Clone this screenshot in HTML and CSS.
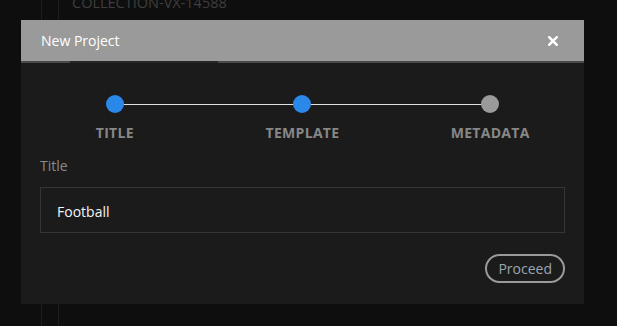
FILE: index.html
```html
<!DOCTYPE html>
<html>
<head>
<meta charset="utf-8">
<link rel="stylesheet" href="styles.css">
</head>
<body>
<div class="page">
  <div class="rail"></div>
  <div class="bg-title">COLLECTION-VX-14588</div>
</div>
<div class="modal">
  <div class="modal-header">
    <span class="modal-title">New Project</span>
    <svg class="close" width="10" height="10" viewBox="0 0 10 10"><path d="M1.2 1.2 L8.8 8.8 M8.8 1.2 L1.2 8.8" stroke="#fff" stroke-width="2.4" stroke-linecap="square"/></svg>
  </div>
  <div class="stepper">
    <div class="track">
      <span class="dot active"></span>
      <span class="dot active"></span>
      <span class="dot"></span>
    </div>
    <div class="labels">
      <span>TITLE</span>
      <span>TEMPLATE</span>
      <span>METADATA</span>
    </div>
  </div>
  <div class="form">
    <div class="field-label">Title</div>
    <div class="input">Football</div>
    <div class="actions">
      <button class="btn">Proceed</button>
    </div>
  </div>
</div>
</body>
</html>
```
FILE: styles.css
```css
html, body {
  margin: 0;
  padding: 0;
  height: 100%;
}
body {
  background: #0e0e0e;
  font-family: "Open Sans", "Noto Sans", sans-serif;
  position: relative;
  overflow: hidden;
}
.page {
  display: flex;
  height: 100%;
  padding-left: 41px;
}
.rail {
  width: 16px;
  border-left: 1px solid #1d1d1d;
  border-right: 1px solid #1d1d1d;
  height: 100%;
}
.bg-title {
  margin-left: 13px;
  margin-top: -7px;
  font-size: 14.5px;
  line-height: 20px;
  color: #3e3e3e;
}
.modal {
  position: absolute;
  top: 20px;
  left: 21px;
  width: 563px;
  height: 284px;
  background: #1b1b1b;
}
.modal-header {
  position: relative;
  height: 41px;
  background: #9a9a9a;
  border-bottom: 2px solid #494949;
  display: flex;
  align-items: center;
  justify-content: space-between;
  padding: 0 26px 0 20px;
}
.modal-header::after {
  content: "";
  position: absolute;
  left: 49px;
  width: 148px;
  bottom: -2px;
  height: 2px;
  background: #262626;
}
.modal-title {
  color: #fff;
  font-size: 14px;
  line-height: 19px;
}
.close {
  display: block;
}
.stepper {
  padding-top: 32px;
}
.track {
  display: grid;
  grid-template-columns: repeat(3, 1fr);
  height: 18px;
  background: linear-gradient(#e2e2e2, #e2e2e2) no-repeat center / 66.67% 1px;
}
.dot {
  width: 18px;
  height: 18px;
  border-radius: 50%;
  background: #9a9a9a;
  justify-self: center;
}
.dot.active {
  background: #2b88e8;
}
.labels {
  display: grid;
  grid-template-columns: repeat(3, 1fr);
  margin-top: 10px;
  text-align: center;
  font-size: 14px;
  line-height: 19px;
  font-weight: 700;
  letter-spacing: 0.3px;
  color: #878787;
}
.form {
  padding: 0 19px;
}
.field-label {
  margin-top: 14px;
  font-size: 14px;
  line-height: 19px;
  color: #8a8a8a;
}
.input {
  margin-top: 12px;
  height: 46px;
  box-sizing: border-box;
  border: 1px solid #353535;
  padding: 14px 16px 0;
  font-size: 14px;
  line-height: 19px;
  color: #f4f4f4;
}
.actions {
  display: flex;
  justify-content: flex-end;
  margin-top: 21px;
}
.btn {
  background: transparent;
  border: 2px solid #9a9a9a;
  border-radius: 999px;
  padding: 3px 11px;
  font-family: inherit;
  font-size: 14px;
  line-height: 19px;
  color: #9aa6b2;
}
```
